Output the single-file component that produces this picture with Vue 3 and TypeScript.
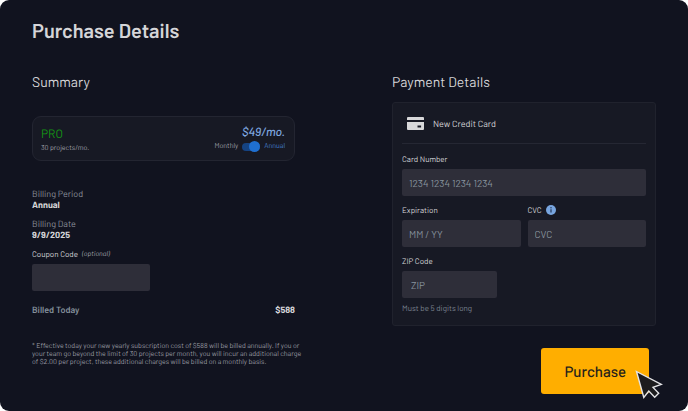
<script setup lang="ts">
import { computed, ref } from 'vue'

const annual = ref(true)
const coupon = ref('')
const cardNumber = ref('')
const expiration = ref('')
const cvc = ref('')
const zip = ref('')

const period = computed(() => (annual.value ? 'Annual' : 'Monthly'))
</script>

<template>
  <main class="page">
    <h1 class="title">Purchase Details</h1>
    <div class="columns">
      <section class="summary">
        <h2 class="heading">Summary</h2>
        <div class="plan">
          <div class="plan-side">
            <span class="plan-name">PRO</span>
            <span class="small">30 projects/mo.</span>
          </div>
          <div class="plan-side plan-end">
            <span class="price">$49/mo.</span>
            <label class="cycle small">
              <span>Monthly</span>
              <input v-model="annual" class="switch" type="checkbox" role="switch" />
              <span class="chosen">Annual</span>
            </label>
          </div>
        </div>
        <dl class="facts">
          <div>
            <dt>Billing Period</dt>
            <dd>{{ period }}</dd>
          </div>
          <div>
            <dt>Billing Date</dt>
            <dd>9/9/2025</dd>
          </div>
        </dl>
        <div class="field coupon">
          <label class="label" for="coupon">Coupon Code <em class="optional">(optional)</em></label>
          <input id="coupon" v-model="coupon" class="input" type="text" />
        </div>
        <div class="total">
          <span class="total-label">Billed Today</span>
          <strong class="amount">$588</strong>
        </div>
        <p class="note">
          * Effective today your new yearly subscription cost of $588 will be billed annually. If you or
          your team go beyond the limit of 30 projects per month, you will incur an additional charge
          of $2.00 per project, these additional charges will be billed on a monthly basis.
        </p>
      </section>

      <form class="payment" @submit.prevent>
        <h2 class="heading">Payment Details</h2>
        <div class="card">
          <div class="card-head">
            <svg class="card-icon" viewBox="0 0 17 13" aria-hidden="true">
              <path d="M1 0h15q1 0 1 1v2H0V1q0-1 1-1z" />
              <path fill-rule="evenodd" d="M0 5h17v7q0 1-1 1H1q-1 0-1-1zM10.5 8.5v2h3.6v-2z" />
            </svg>
            <span>New Credit Card</span>
          </div>
          <div class="fields">
            <div class="field wide">
              <label class="label" for="number">Card Number</label>
              <input id="number" v-model="cardNumber" class="input" type="text" placeholder="1234 1234 1234 1234" />
            </div>
            <div class="field">
              <label class="label" for="expiration">Expiration</label>
              <input id="expiration" v-model="expiration" class="input" type="text" placeholder="MM / YY" />
            </div>
            <div class="field">
              <label class="label" for="cvc">
                CVC
                <svg class="info" viewBox="0 0 10 10" aria-hidden="true">
                  <circle cx="5" cy="5" r="5" fill="#78a5df" />
                  <circle cx="5" cy="2.8" r=".7" fill="#1c2c4c" />
                  <path d="M5 4.3v3.2" stroke="#1c2c4c" stroke-width="1.1" />
                </svg>
              </label>
              <input id="cvc" v-model="cvc" class="input" type="text" placeholder="CVC" />
            </div>
            <div class="field wide">
              <label class="label" for="zip">ZIP Code</label>
              <input id="zip" v-model="zip" class="input zip" type="text" placeholder="ZIP" aria-describedby="zip-hint" />
              <span id="zip-hint" class="hint">Must be 5 digits long</span>
            </div>
          </div>
        </div>
        <div class="action">
          <button class="purchase" type="submit">Purchase</button>
          <svg class="cursor" viewBox="0 0 28 30" aria-hidden="true">
            <path
              d="M1.5 1.5L8.8 27.5L13.8 21L19.7 27.2L23.7 23.3L18 17.4L26.3 14.4Z"
              fill="#1c1c1e"
              stroke="#e4e4e6"
              stroke-width="1.4"
            />
          </svg>
        </div>
      </form>
    </div>
  </main>
</template>

<style>
body {
  background: #ffffff;
}
</style>

<style scoped>
.page {
  box-sizing: border-box;
  min-height: 100vh;
  padding: 16px 32px;
  border-radius: 9px;
  background: #11131f;
  color: #d5d5d8;
  font-family: Barlow, Roboto, "Liberation Sans", sans-serif;
  font-size: 9px;
  text-rendering: geometricPrecision;
}
.title {
  margin: 0 0 28px;
  font-size: 20px;
  line-height: 28px;
  font-weight: 600;
}
.columns {
  display: grid;
  grid-template-columns: 263fr 264fr;
  column-gap: 97px;
}
.heading {
  margin: 0;
  font-size: 14px;
  line-height: 20px;
  font-weight: 400;
}
.plan {
  display: flex;
  justify-content: space-between;
  margin-top: 24px;
  padding: 8px 9px 7px 8px;
  border: 1px solid #232531;
  border-radius: 9px;
  background: #171924;
}
.plan-side {
  display: flex;
  flex-direction: column;
}
.plan-end {
  align-items: flex-end;
}
.plan-name {
  color: #149614;
  font-size: 12px;
  line-height: 18px;
}
.price {
  color: #7fa8e0;
  font-size: 12px;
  line-height: 15px;
  font-style: italic;
  font-weight: 500;
}
.small {
  color: #a0a2aa;
  font-size: 7px;
  line-height: 10px;
}
.cycle {
  display: flex;
  align-items: center;
  gap: 4px;
  line-height: 13px;
}
.chosen {
  color: #4580d0;
}
.switch {
  position: relative;
  appearance: none;
  width: 18px;
  height: 8px;
  margin: 0;
  border-radius: 4px;
  background: #154382;
}
.switch::before {
  content: "";
  position: absolute;
  top: -2px;
  left: 0;
  width: 11px;
  height: 11px;
  border-radius: 50%;
  background: #1f6fd0;
}
.switch:checked::before {
  left: 7px;
}
.facts {
  display: grid;
  gap: 8px;
  margin: 27px 0 7px;
  line-height: 11px;
}
.facts dt {
  color: #8a9099;
}
.facts dd {
  margin: 0;
  font-weight: 700;
}
.field {
  display: flex;
  flex-direction: column;
  gap: 3px;
}
.label {
  display: flex;
  align-items: center;
  gap: 4px;
  font-size: 8px;
  line-height: 14px;
}
.optional {
  color: #a4a6ad;
  font-size: 7px;
}
.input {
  box-sizing: border-box;
  width: 100%;
  height: 27px;
  padding: 0 7px;
  border: 0;
  border-radius: 2px;
  background: #2e2e39;
  color: #d5d5d8;
  font: inherit;
  font-size: 10px;
  text-rendering: inherit;
}
.input::placeholder {
  color: #87939d;
  opacity: 1;
}
.coupon {
  width: 45%;
}
.total {
  display: flex;
  justify-content: space-between;
  margin: 12px 0 25px;
  line-height: 14px;
}
.total-label {
  color: #84909b;
  font-weight: 600;
}
.amount {
  font-weight: 700;
}
.note {
  margin: 0 -12px 0 0;
  color: #9a9ca3;
  font-size: 7px;
  line-height: 8px;
}
.card {
  margin-top: 10px;
  padding: 0 9px 10px;
  border: 1px solid #20222d;
  border-radius: 3px;
  background: #171924;
}
.card-head {
  display: flex;
  align-items: center;
  gap: 9px;
  height: 40px;
  padding: 0 5px;
  border-bottom: 1px solid #252733;
}
.card-icon {
  width: 17px;
  height: 13px;
  fill: #d8d8da;
}
.fields {
  display: grid;
  grid-template-columns: 1fr 1fr;
  gap: 7px;
  margin-top: 8px;
}
.wide {
  grid-column: 1 / -1;
}
.zip {
  width: 39%;
  padding: 0 9px;
}
.info {
  width: 10px;
  height: 10px;
}
.hint {
  color: #7a828e;
  font-size: 8px;
  line-height: 14px;
}
.action {
  position: relative;
  width: fit-content;
  margin: 22px 7px 0 auto;
}
.purchase {
  padding: 0 23px;
  border: 0;
  border-radius: 3px;
  background: #ffae00;
  color: #24211c;
  font: inherit;
  font-size: 15px;
  line-height: 46px;
  font-weight: 500;
  text-rendering: inherit;
}
.cursor {
  position: absolute;
  right: -14px;
  bottom: -6px;
  width: 28px;
  height: 30px;
}
</style>
